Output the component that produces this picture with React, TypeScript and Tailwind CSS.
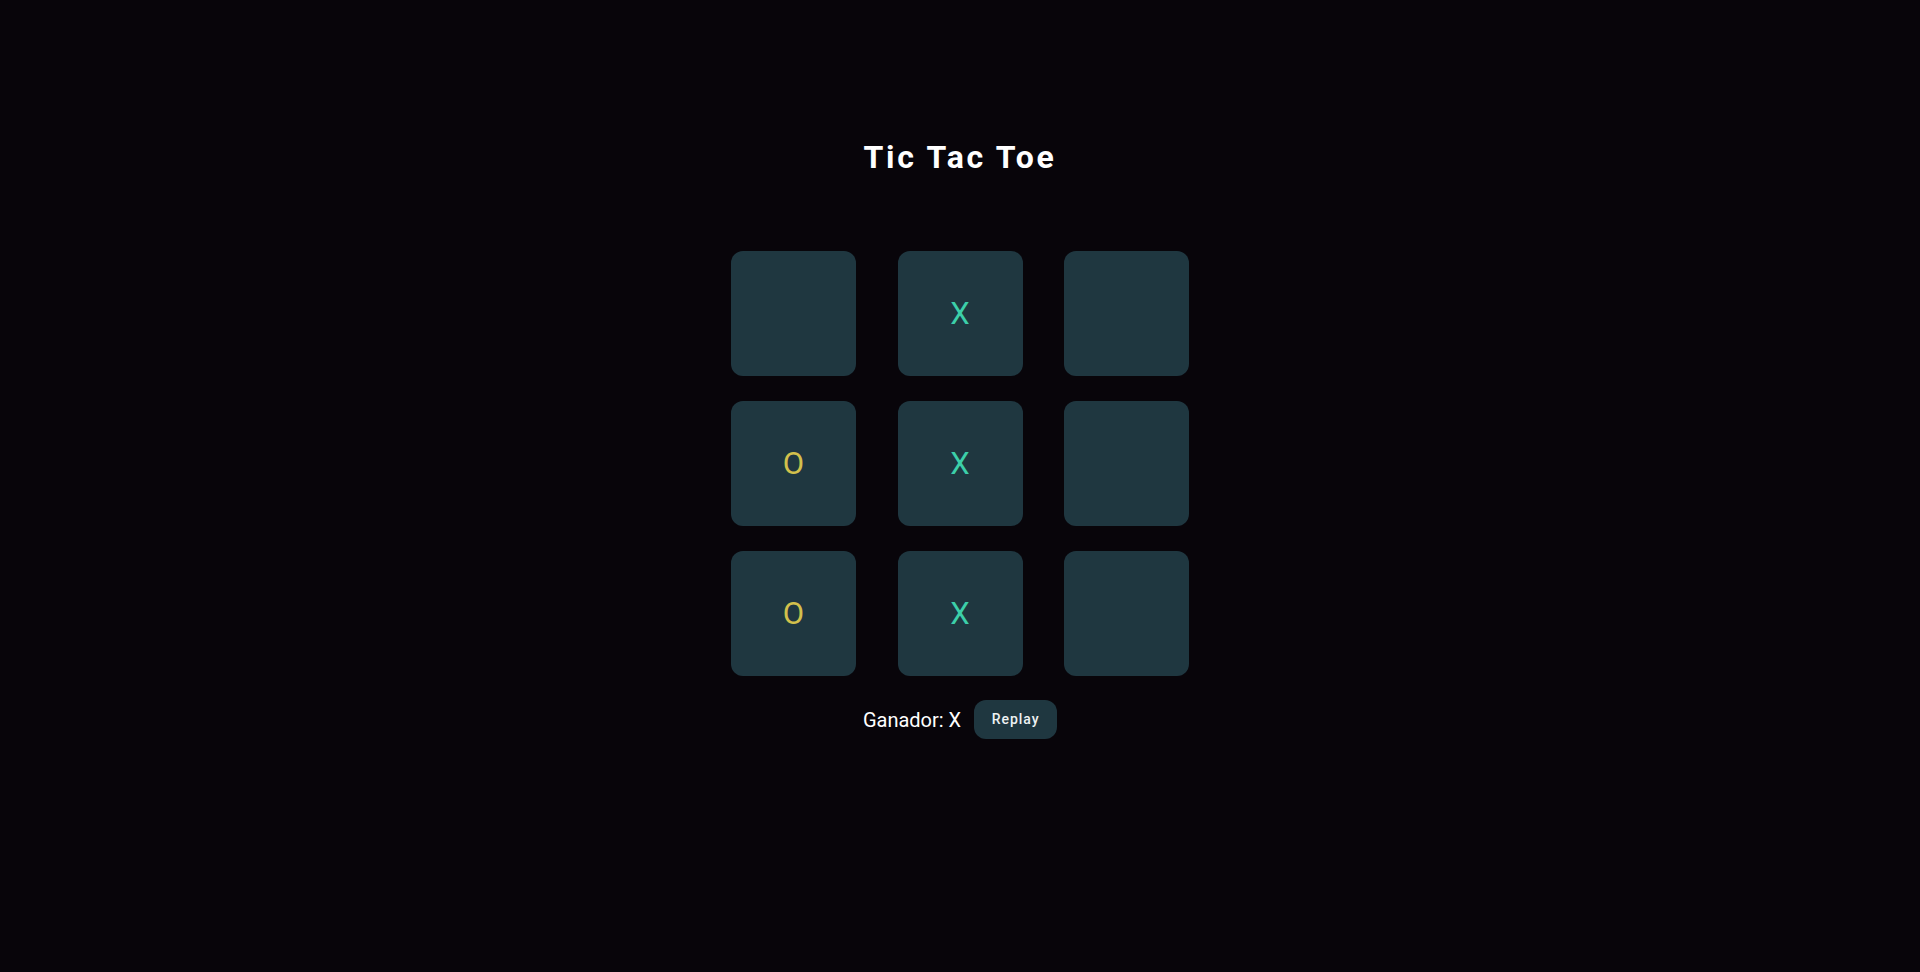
import React, { useState } from 'react';

type Mark = 'X' | 'O' | null;

const INITIAL: Mark[] = [null, 'X', null, 'O', 'X', null, 'O', 'X', null];

export default function App() {
  const [board] = useState<Mark[]>(INITIAL);

  return (
    <div
      className="min-h-screen w-full bg-[#08050a] flex flex-col items-center pt-[137px]"
      style={{ fontFamily: 'Roboto, "Noto Sans", sans-serif' }}
    >
      <h1 className="text-[32px] leading-[40px] font-bold text-white tracking-[0.085em]">Tic Tac Toe</h1>

      <div className="mt-[74px] grid grid-cols-[125px_125px_125px] gap-x-[41.5px] gap-y-[25px]">
        {board.map((cell, i) => (
          <button
            key={i}
            className="w-[125px] h-[125px] rounded-xl bg-[#1f3740] flex items-center justify-center text-[31px] pt-[2px]"
          >
            <span className={cell === 'X' ? 'text-[#3ccfa9]' : 'text-[#d2c04c]'}>{cell}</span>
          </button>
        ))}
      </div>

      <div className="mt-[24px] flex items-center gap-[13px]">
        <span className="text-[20px] text-white">Ganador: X</span>
        <button className="h-[39px] w-[83px] rounded-[12px] bg-[#1f3740] text-[14px] font-medium tracking-[0.07em] text-[#eef2f3]">
          Replay
        </button>
      </div>
    </div>
  );
}
